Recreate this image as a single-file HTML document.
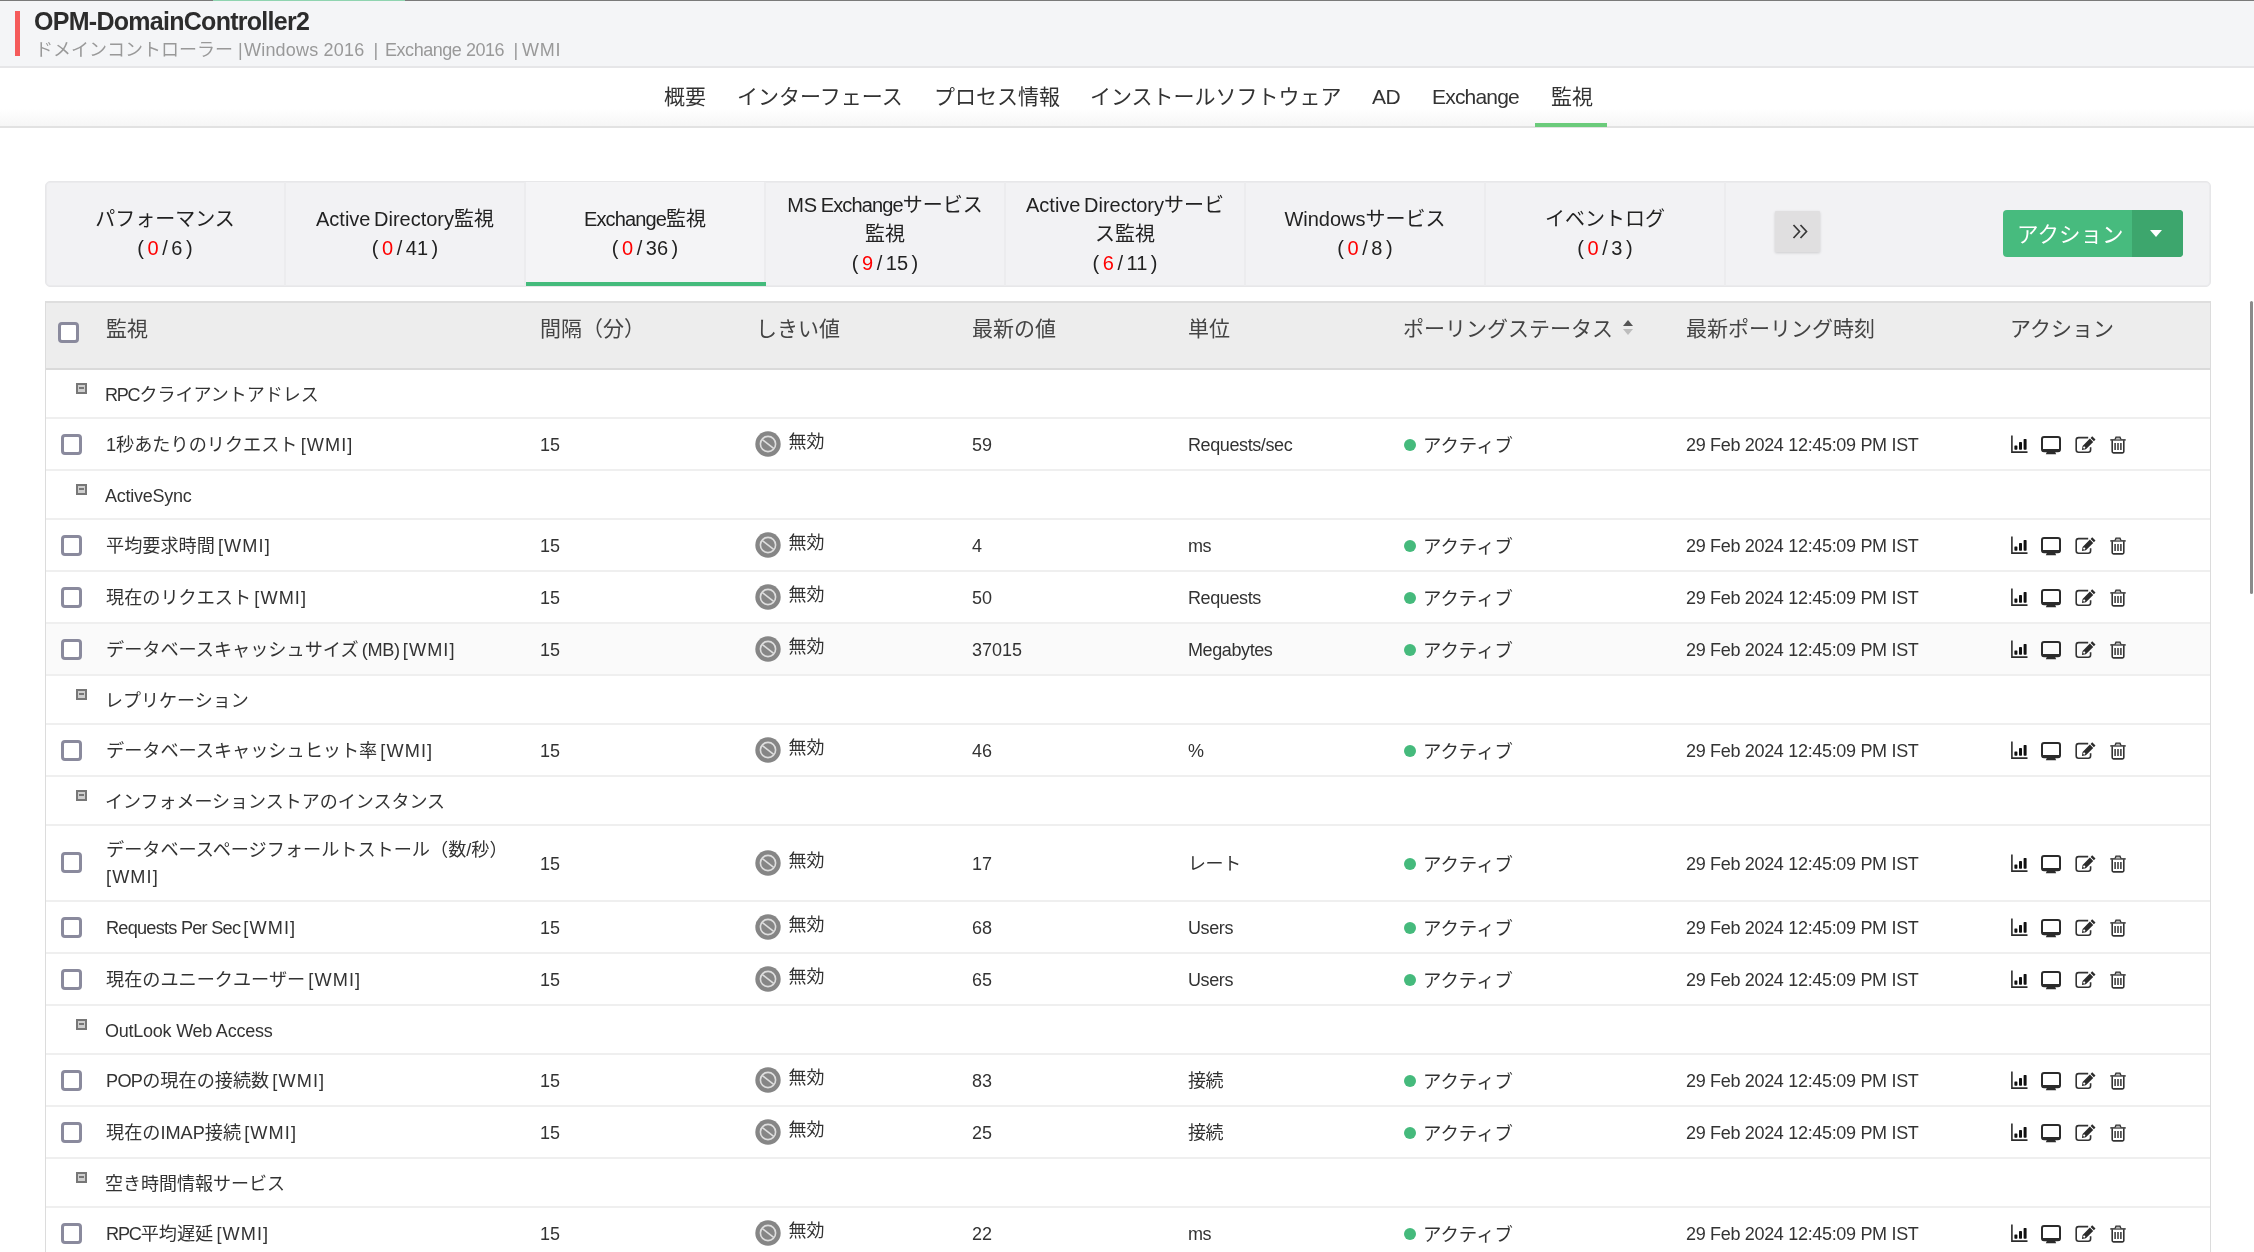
<!DOCTYPE html>
<html lang="ja">
<head>
<meta charset="utf-8">
<title>OPM-DomainController2</title>
<style>
*{box-sizing:border-box}
html,body{margin:0;padding:0}
body{will-change:transform;width:2254px;height:1252px;overflow:hidden;background:#fff;position:relative;font-family:"Liberation Sans","Noto Sans CJK JP",sans-serif;color:#333;font-size:18px}
#topline{position:absolute;left:0;top:0;width:2254px;height:2px;background:#7a7a7a}
#topline i{position:absolute;left:213px;top:0;width:192px;height:2px;background:#8fd4b0}
#hdr{position:absolute;left:0;top:1px;width:2254px;height:67px;background:#f4f5f7;border-bottom:2px solid #e6e6e8}
#hdr .bar{position:absolute;left:15px;top:9.5px;width:5px;height:45px;background:#f55b5b}
#hdr h1{position:absolute;left:34px;top:5px;margin:0;font-size:25px;line-height:30px;font-weight:bold;color:#2c2c2c;letter-spacing:-.72px;white-space:nowrap}
#hdr p{position:absolute;left:35px;top:37px;margin:0;font-size:18px;line-height:24px;color:#999;white-space:pre}#hdr p span{position:absolute;top:0}
#nav{position:absolute;left:0;top:68px;width:2254px;height:60px;background:linear-gradient(#fff 0,#fff 70%,#f6f6f6 100%);border-bottom:2px solid #e2e2e2}
#nav a{position:absolute;top:0;height:59px;line-height:58px;font-size:21px;color:#333;white-space:nowrap}
#nav .act{position:absolute;left:1535px;top:55px;width:72px;height:4px;background:#6bcb7b}
#tabs{position:absolute;left:45px;top:181px;width:2166px;height:106px;background:#f2f2f4;border:1px solid #e7e7e9;box-shadow:inset 0 0 0 1px #ebebed;border-radius:5px}
#tabs .t{position:absolute;top:0;width:240px;height:104px;border-right:2px solid #ececee;text-align:center;font-size:20px;line-height:29px;color:#222;display:flex;flex-direction:column;justify-content:center;word-spacing:-2px}
#tabs .t em{font-style:normal;color:#f00}
#tabs .t.on{background:#f4f4f6}
#tabs .t.on:after{content:"";position:absolute;left:0;bottom:0;width:240px;height:4px;background:#44bb7c}
#more{position:absolute;left:1729px;top:29px;width:45px;height:41px;background:#e0dfe0;border-radius:1px;box-shadow:0 1px 3px rgba(0,0,0,.16)}
#actb{position:absolute;left:1957px;top:28px;width:180px;height:47px;background:#47bb7e;border-radius:4px;color:#fff;font-size:21.5px;line-height:50px;padding-left:14px;overflow:hidden}
#actb i{position:absolute;left:129px;top:0;width:51px;height:48px;background:#3da66d}
#actb i:after{content:"";position:absolute;left:18px;top:20px;border:6px solid transparent;border-top:7px solid #fff;border-bottom:0}
#tbl{position:absolute;left:45px;top:301px;width:2166px;height:960px;border:1px solid #dcdcdc;border-top:2px solid #dedede;border-bottom:0}
#th{position:relative;height:67px;background:#ededed;border-bottom:2px solid #dadada;font-size:21px;color:#444}
#th span{position:absolute;top:11px;line-height:30px;white-space:nowrap}
.cb{position:absolute;left:15px;width:21px;height:21px;border:3px solid #8a8a9d;border-radius:4px;background:#fff}
.row{position:relative;border-bottom:2px solid #efefef;white-space:nowrap}
.row.g{height:49px}
.row.d{height:52px}
.row.two{height:76px}
.row.alt{background:#fafafa}
.row>span{position:absolute;top:0;line-height:53.5px;height:54px}
.row.d .cb{top:15px}
.row.two .cb{top:26px}
.row.two>span{top:12px}
.row.two>.c1{top:11px;line-height:27px;height:54px}
.col{position:absolute;left:30px;top:12.5px;width:11px;height:11px;border:2px solid #777;background:#cfcfcf}
.col:after{content:"";position:absolute;left:1px;top:2px;width:5px;height:2px;background:#777}
.gt{left:59px;line-height:50px !important}
.c1{left:60px}.c2{left:494px}.c3{left:710px}.c4{left:926px}.c5{left:1142px}.c6{left:1357px}.c7{left:1640px}
.c3 b{font-weight:normal;font-size:18px;position:absolute;left:32.5px;top:-3px}
.dis{position:absolute;left:-1px;top:12px}
.dot{position:absolute;left:1px;top:20px;width:12px;height:12px;border-radius:6px;background:#45ba7c}
.c6{padding-left:20px}
.c7{letter-spacing:-.32px}
.l{letter-spacing:-.4px}.w{letter-spacing:1.1px;margin-left:-3px}.l2{letter-spacing:-.24px}.w0{letter-spacing:1.1px}.rq{letter-spacing:-.75px}.pop{letter-spacing:-.7px}.mb{letter-spacing:-.35px;margin-left:-1.5px}.c6{font-size:18.4px}.c1{font-size:18.15px}.rpc{letter-spacing:-1.2px}.x{letter-spacing:-.85px}.c5{letter-spacing:-.4px}
.acts svg{position:absolute}
.row .acts{left:0}
.i1{left:1965px;top:15.5px}.i2{left:1995px;top:16.5px}.i3{left:2029px;top:16.5px}.i4{left:2064px;top:16.5px}
.row.two .acts{top:12px}
#sb{position:absolute;left:2249.5px;top:301px;width:3px;height:292.5px;background:#8a8a8a;border-radius:1.5px}
</style>
</head>
<body>
<div id="topline"><i></i></div>
<div id="hdr"><div class="bar"></div><h1>OPM-DomainController2</h1><p><span style="left:0">ドメインコントローラー</span><span style="left:203px">|</span><span style="left:209px;letter-spacing:.2px">Windows 2016</span><span style="left:338.5px">|</span><span style="left:350px;letter-spacing:-.46px">Exchange 2016</span><span style="left:478.5px">|</span><span style="left:487px;letter-spacing:.7px">WMI</span></p></div>
<div id="nav">
<a style="left:664px">概要</a>
<a style="left:737px">インターフェース</a>
<a style="left:934px">プロセス情報</a>
<a style="left:1090px">インストールソフトウェア</a>
<a style="left:1372px" class="l">AD</a>
<a style="left:1432px;letter-spacing:-.8px">Exchange</a>
<a style="left:1551px">監視</a>
<div class="act"></div>
</div>
<div id="tabs">
<div class="t" style="left:0"><div>パフォーマンス</div><div>( <em>0</em> / 6 )</div></div>
<div class="t" style="left:240px"><div>Active Directory監視</div><div>( <em>0</em> / 41 )</div></div>
<div class="t on" style="left:480px"><div><span class="x">Exchange</span>監視</div><div>( <em>0</em> / 36 )</div></div>
<div class="t" style="left:720px"><div>MS <span class="x">Exchange</span>サービス</div><div>監視</div><div>( <em>9</em> / 15 )</div></div>
<div class="t" style="left:960px"><div>Active Directoryサービ</div><div>ス監視</div><div>( <em>6</em> / 11 )</div></div>
<div class="t" style="left:1200px"><div>Windowsサービス</div><div>( <em>0</em> / 8 )</div></div>
<div class="t" style="left:1440px"><div>イベントログ</div><div>( <em>0</em> / 3 )</div></div>
<div id="more"><svg width="45" height="41" viewBox="0 0 45 41"><path d="M18.5 14l6 6.5-6 6.5M25.5 14l6 6.5-6 6.5" fill="none" stroke="#383838" stroke-width="1.7"/></svg></div>
<div id="actb">アクション<i></i></div>
</div>
<div id="tbl">
<div id="th"><i class="cb" style="left:12px;top:19px"></i>
<span style="left:60px">監視</span><span style="left:494px">間隔（分）</span><span style="left:710px">しきい値</span><span style="left:926px">最新の値</span><span style="left:1142px">単位</span><span style="left:1357px">ポーリングステータス</span><span style="left:1640px">最新ポーリング時刻</span><span style="left:1964px">アクション</span>
<svg style="position:absolute;left:1576px;top:16px" width="12" height="17" viewBox="0 0 12 17"><path d="M1 7l5-6 5 6z" fill="#555"/><path d="M1 10l5 6 5-6z" fill="#bdbdbd"/></svg>
</div>
<div class="row g"><i class="col"></i><span class="gt "><span class=rpc>RPC</span>クライアントアドレス</span></div>
<div class="row d"><i class="cb"></i><span class="c1">1秒あたりのリクエスト<span class="w"> [WMI]</span></span><span class="c2">15</span><span class="c3"><svg class="dis" viewBox="0 0 26 26" width="26" height="26"><circle cx="13" cy="13" r="12.7" fill="#868686"/><circle cx="13" cy="13" r="7.6" fill="none" stroke="#dedede" stroke-width="1.6"/><path d="M7.4 8.6l11.2 8.8" stroke="#dedede" stroke-width="1.6"/></svg><b>無効</b></span><span class="c4">59</span><span class="c5">Requests/sec</span><span class="c6"><i class="dot"></i>アクティブ</span><span class="c7">29 Feb 2024 12:45:09 PM IST</span><span class="acts"><svg class="i1" viewBox="0 0 18 18" width="18" height="18"><path d="M0.9 0.5v16.6h15.6" fill="none" stroke="#2b2b2b" stroke-width="1.6"/><rect x="3.4" y="10.4" width="3" height="4.4" rx=".7" fill="#111"/><rect x="8" y="7" width="3" height="7.8" rx=".7" fill="#111"/><rect x="12.6" y="4" width="3" height="10.8" rx=".7" fill="#111"/></svg><svg class="i2" viewBox="0 0 20 19" width="20" height="19"><rect x="1" y="1" width="18" height="14.2" rx="2" fill="none" stroke="#2b2b2b" stroke-width="2"/><rect x="1" y="13" width="18" height="2.4" fill="#2b2b2b"/><path d="M6 15.5h8l1.2 2.8h-10.4z" fill="#2b2b2b"/></svg><svg class="i3" viewBox="0 0 21 18" width="21" height="18"><path d="M13.2 1.6H3.6a2.4 2.4 0 0 0-2.4 2.4v9.8a2.4 2.4 0 0 0 2.4 2.4h9.6a2.4 2.4 0 0 0 2.4-2.4v-2.6" fill="none" stroke="#333" stroke-width="1.6"/><path d="M17.2 0.3l3.3 3.3-1.6 1.6-3.3-3.3zM14.9 2.6l3.3 3.3-7.3 7.3-4 .8.7-4.1z" fill="#2b2b2b"/><circle cx="9.2" cy="11.6" r="1.1" fill="#fff"/></svg><svg class="i4" viewBox="0 0 16 18" width="16" height="18"><path d="M0.3 3.9h15.4" stroke="#333" stroke-width="1.5"/><path d="M5 3.6l1-2.4h4l1 2.4" fill="#bbb" stroke="#333" stroke-width="1.3"/><path d="M2.2 4.2v11.4a1.3 1.3 0 0 0 1.3 1.3h9a1.3 1.3 0 0 0 1.3-1.3V4.2" fill="none" stroke="#333" stroke-width="1.6"/><path d="M5.1 7v7M8 7v7M10.9 7v7" stroke="#333" stroke-width="1.5"/></svg></span></div>
<div class="row g"><i class="col"></i><span class="gt l2">ActiveSync</span></div>
<div class="row d"><i class="cb"></i><span class="c1">平均要求時間<span class="w"> [WMI]</span></span><span class="c2">15</span><span class="c3"><svg class="dis" viewBox="0 0 26 26" width="26" height="26"><circle cx="13" cy="13" r="12.7" fill="#868686"/><circle cx="13" cy="13" r="7.6" fill="none" stroke="#dedede" stroke-width="1.6"/><path d="M7.4 8.6l11.2 8.8" stroke="#dedede" stroke-width="1.6"/></svg><b>無効</b></span><span class="c4">4</span><span class="c5">ms</span><span class="c6"><i class="dot"></i>アクティブ</span><span class="c7">29 Feb 2024 12:45:09 PM IST</span><span class="acts"><svg class="i1" viewBox="0 0 18 18" width="18" height="18"><path d="M0.9 0.5v16.6h15.6" fill="none" stroke="#2b2b2b" stroke-width="1.6"/><rect x="3.4" y="10.4" width="3" height="4.4" rx=".7" fill="#111"/><rect x="8" y="7" width="3" height="7.8" rx=".7" fill="#111"/><rect x="12.6" y="4" width="3" height="10.8" rx=".7" fill="#111"/></svg><svg class="i2" viewBox="0 0 20 19" width="20" height="19"><rect x="1" y="1" width="18" height="14.2" rx="2" fill="none" stroke="#2b2b2b" stroke-width="2"/><rect x="1" y="13" width="18" height="2.4" fill="#2b2b2b"/><path d="M6 15.5h8l1.2 2.8h-10.4z" fill="#2b2b2b"/></svg><svg class="i3" viewBox="0 0 21 18" width="21" height="18"><path d="M13.2 1.6H3.6a2.4 2.4 0 0 0-2.4 2.4v9.8a2.4 2.4 0 0 0 2.4 2.4h9.6a2.4 2.4 0 0 0 2.4-2.4v-2.6" fill="none" stroke="#333" stroke-width="1.6"/><path d="M17.2 0.3l3.3 3.3-1.6 1.6-3.3-3.3zM14.9 2.6l3.3 3.3-7.3 7.3-4 .8.7-4.1z" fill="#2b2b2b"/><circle cx="9.2" cy="11.6" r="1.1" fill="#fff"/></svg><svg class="i4" viewBox="0 0 16 18" width="16" height="18"><path d="M0.3 3.9h15.4" stroke="#333" stroke-width="1.5"/><path d="M5 3.6l1-2.4h4l1 2.4" fill="#bbb" stroke="#333" stroke-width="1.3"/><path d="M2.2 4.2v11.4a1.3 1.3 0 0 0 1.3 1.3h9a1.3 1.3 0 0 0 1.3-1.3V4.2" fill="none" stroke="#333" stroke-width="1.6"/><path d="M5.1 7v7M8 7v7M10.9 7v7" stroke="#333" stroke-width="1.5"/></svg></span></div>
<div class="row d"><i class="cb"></i><span class="c1">現在のリクエスト<span class="w"> [WMI]</span></span><span class="c2">15</span><span class="c3"><svg class="dis" viewBox="0 0 26 26" width="26" height="26"><circle cx="13" cy="13" r="12.7" fill="#868686"/><circle cx="13" cy="13" r="7.6" fill="none" stroke="#dedede" stroke-width="1.6"/><path d="M7.4 8.6l11.2 8.8" stroke="#dedede" stroke-width="1.6"/></svg><b>無効</b></span><span class="c4">50</span><span class="c5">Requests</span><span class="c6"><i class="dot"></i>アクティブ</span><span class="c7">29 Feb 2024 12:45:09 PM IST</span><span class="acts"><svg class="i1" viewBox="0 0 18 18" width="18" height="18"><path d="M0.9 0.5v16.6h15.6" fill="none" stroke="#2b2b2b" stroke-width="1.6"/><rect x="3.4" y="10.4" width="3" height="4.4" rx=".7" fill="#111"/><rect x="8" y="7" width="3" height="7.8" rx=".7" fill="#111"/><rect x="12.6" y="4" width="3" height="10.8" rx=".7" fill="#111"/></svg><svg class="i2" viewBox="0 0 20 19" width="20" height="19"><rect x="1" y="1" width="18" height="14.2" rx="2" fill="none" stroke="#2b2b2b" stroke-width="2"/><rect x="1" y="13" width="18" height="2.4" fill="#2b2b2b"/><path d="M6 15.5h8l1.2 2.8h-10.4z" fill="#2b2b2b"/></svg><svg class="i3" viewBox="0 0 21 18" width="21" height="18"><path d="M13.2 1.6H3.6a2.4 2.4 0 0 0-2.4 2.4v9.8a2.4 2.4 0 0 0 2.4 2.4h9.6a2.4 2.4 0 0 0 2.4-2.4v-2.6" fill="none" stroke="#333" stroke-width="1.6"/><path d="M17.2 0.3l3.3 3.3-1.6 1.6-3.3-3.3zM14.9 2.6l3.3 3.3-7.3 7.3-4 .8.7-4.1z" fill="#2b2b2b"/><circle cx="9.2" cy="11.6" r="1.1" fill="#fff"/></svg><svg class="i4" viewBox="0 0 16 18" width="16" height="18"><path d="M0.3 3.9h15.4" stroke="#333" stroke-width="1.5"/><path d="M5 3.6l1-2.4h4l1 2.4" fill="#bbb" stroke="#333" stroke-width="1.3"/><path d="M2.2 4.2v11.4a1.3 1.3 0 0 0 1.3 1.3h9a1.3 1.3 0 0 0 1.3-1.3V4.2" fill="none" stroke="#333" stroke-width="1.6"/><path d="M5.1 7v7M8 7v7M10.9 7v7" stroke="#333" stroke-width="1.5"/></svg></span></div>
<div class="row d alt"><i class="cb"></i><span class="c1">データベースキャッシュサイズ<span class="mb"> (MB)</span><span class="w"> [WMI]</span></span><span class="c2">15</span><span class="c3"><svg class="dis" viewBox="0 0 26 26" width="26" height="26"><circle cx="13" cy="13" r="12.7" fill="#868686"/><circle cx="13" cy="13" r="7.6" fill="none" stroke="#dedede" stroke-width="1.6"/><path d="M7.4 8.6l11.2 8.8" stroke="#dedede" stroke-width="1.6"/></svg><b>無効</b></span><span class="c4">37015</span><span class="c5">Megabytes</span><span class="c6"><i class="dot"></i>アクティブ</span><span class="c7">29 Feb 2024 12:45:09 PM IST</span><span class="acts"><svg class="i1" viewBox="0 0 18 18" width="18" height="18"><path d="M0.9 0.5v16.6h15.6" fill="none" stroke="#2b2b2b" stroke-width="1.6"/><rect x="3.4" y="10.4" width="3" height="4.4" rx=".7" fill="#111"/><rect x="8" y="7" width="3" height="7.8" rx=".7" fill="#111"/><rect x="12.6" y="4" width="3" height="10.8" rx=".7" fill="#111"/></svg><svg class="i2" viewBox="0 0 20 19" width="20" height="19"><rect x="1" y="1" width="18" height="14.2" rx="2" fill="none" stroke="#2b2b2b" stroke-width="2"/><rect x="1" y="13" width="18" height="2.4" fill="#2b2b2b"/><path d="M6 15.5h8l1.2 2.8h-10.4z" fill="#2b2b2b"/></svg><svg class="i3" viewBox="0 0 21 18" width="21" height="18"><path d="M13.2 1.6H3.6a2.4 2.4 0 0 0-2.4 2.4v9.8a2.4 2.4 0 0 0 2.4 2.4h9.6a2.4 2.4 0 0 0 2.4-2.4v-2.6" fill="none" stroke="#333" stroke-width="1.6"/><path d="M17.2 0.3l3.3 3.3-1.6 1.6-3.3-3.3zM14.9 2.6l3.3 3.3-7.3 7.3-4 .8.7-4.1z" fill="#2b2b2b"/><circle cx="9.2" cy="11.6" r="1.1" fill="#fff"/></svg><svg class="i4" viewBox="0 0 16 18" width="16" height="18"><path d="M0.3 3.9h15.4" stroke="#333" stroke-width="1.5"/><path d="M5 3.6l1-2.4h4l1 2.4" fill="#bbb" stroke="#333" stroke-width="1.3"/><path d="M2.2 4.2v11.4a1.3 1.3 0 0 0 1.3 1.3h9a1.3 1.3 0 0 0 1.3-1.3V4.2" fill="none" stroke="#333" stroke-width="1.6"/><path d="M5.1 7v7M8 7v7M10.9 7v7" stroke="#333" stroke-width="1.5"/></svg></span></div>
<div class="row g"><i class="col"></i><span class="gt ">レプリケーション</span></div>
<div class="row d"><i class="cb"></i><span class="c1">データベースキャッシュヒット率<span class="w"> [WMI]</span></span><span class="c2">15</span><span class="c3"><svg class="dis" viewBox="0 0 26 26" width="26" height="26"><circle cx="13" cy="13" r="12.7" fill="#868686"/><circle cx="13" cy="13" r="7.6" fill="none" stroke="#dedede" stroke-width="1.6"/><path d="M7.4 8.6l11.2 8.8" stroke="#dedede" stroke-width="1.6"/></svg><b>無効</b></span><span class="c4">46</span><span class="c5">%</span><span class="c6"><i class="dot"></i>アクティブ</span><span class="c7">29 Feb 2024 12:45:09 PM IST</span><span class="acts"><svg class="i1" viewBox="0 0 18 18" width="18" height="18"><path d="M0.9 0.5v16.6h15.6" fill="none" stroke="#2b2b2b" stroke-width="1.6"/><rect x="3.4" y="10.4" width="3" height="4.4" rx=".7" fill="#111"/><rect x="8" y="7" width="3" height="7.8" rx=".7" fill="#111"/><rect x="12.6" y="4" width="3" height="10.8" rx=".7" fill="#111"/></svg><svg class="i2" viewBox="0 0 20 19" width="20" height="19"><rect x="1" y="1" width="18" height="14.2" rx="2" fill="none" stroke="#2b2b2b" stroke-width="2"/><rect x="1" y="13" width="18" height="2.4" fill="#2b2b2b"/><path d="M6 15.5h8l1.2 2.8h-10.4z" fill="#2b2b2b"/></svg><svg class="i3" viewBox="0 0 21 18" width="21" height="18"><path d="M13.2 1.6H3.6a2.4 2.4 0 0 0-2.4 2.4v9.8a2.4 2.4 0 0 0 2.4 2.4h9.6a2.4 2.4 0 0 0 2.4-2.4v-2.6" fill="none" stroke="#333" stroke-width="1.6"/><path d="M17.2 0.3l3.3 3.3-1.6 1.6-3.3-3.3zM14.9 2.6l3.3 3.3-7.3 7.3-4 .8.7-4.1z" fill="#2b2b2b"/><circle cx="9.2" cy="11.6" r="1.1" fill="#fff"/></svg><svg class="i4" viewBox="0 0 16 18" width="16" height="18"><path d="M0.3 3.9h15.4" stroke="#333" stroke-width="1.5"/><path d="M5 3.6l1-2.4h4l1 2.4" fill="#bbb" stroke="#333" stroke-width="1.3"/><path d="M2.2 4.2v11.4a1.3 1.3 0 0 0 1.3 1.3h9a1.3 1.3 0 0 0 1.3-1.3V4.2" fill="none" stroke="#333" stroke-width="1.6"/><path d="M5.1 7v7M8 7v7M10.9 7v7" stroke="#333" stroke-width="1.5"/></svg></span></div>
<div class="row g"><i class="col"></i><span class="gt ">インフォメーションストアのインスタンス</span></div>
<div class="row d two"><i class="cb"></i><span class="c1">データベースページフォールトストール（数/秒）<br><span class="w0">[WMI]</span></span><span class="c2">15</span><span class="c3"><svg class="dis" viewBox="0 0 26 26" width="26" height="26"><circle cx="13" cy="13" r="12.7" fill="#868686"/><circle cx="13" cy="13" r="7.6" fill="none" stroke="#dedede" stroke-width="1.6"/><path d="M7.4 8.6l11.2 8.8" stroke="#dedede" stroke-width="1.6"/></svg><b>無効</b></span><span class="c4">17</span><span class="c5">レート</span><span class="c6"><i class="dot"></i>アクティブ</span><span class="c7">29 Feb 2024 12:45:09 PM IST</span><span class="acts"><svg class="i1" viewBox="0 0 18 18" width="18" height="18"><path d="M0.9 0.5v16.6h15.6" fill="none" stroke="#2b2b2b" stroke-width="1.6"/><rect x="3.4" y="10.4" width="3" height="4.4" rx=".7" fill="#111"/><rect x="8" y="7" width="3" height="7.8" rx=".7" fill="#111"/><rect x="12.6" y="4" width="3" height="10.8" rx=".7" fill="#111"/></svg><svg class="i2" viewBox="0 0 20 19" width="20" height="19"><rect x="1" y="1" width="18" height="14.2" rx="2" fill="none" stroke="#2b2b2b" stroke-width="2"/><rect x="1" y="13" width="18" height="2.4" fill="#2b2b2b"/><path d="M6 15.5h8l1.2 2.8h-10.4z" fill="#2b2b2b"/></svg><svg class="i3" viewBox="0 0 21 18" width="21" height="18"><path d="M13.2 1.6H3.6a2.4 2.4 0 0 0-2.4 2.4v9.8a2.4 2.4 0 0 0 2.4 2.4h9.6a2.4 2.4 0 0 0 2.4-2.4v-2.6" fill="none" stroke="#333" stroke-width="1.6"/><path d="M17.2 0.3l3.3 3.3-1.6 1.6-3.3-3.3zM14.9 2.6l3.3 3.3-7.3 7.3-4 .8.7-4.1z" fill="#2b2b2b"/><circle cx="9.2" cy="11.6" r="1.1" fill="#fff"/></svg><svg class="i4" viewBox="0 0 16 18" width="16" height="18"><path d="M0.3 3.9h15.4" stroke="#333" stroke-width="1.5"/><path d="M5 3.6l1-2.4h4l1 2.4" fill="#bbb" stroke="#333" stroke-width="1.3"/><path d="M2.2 4.2v11.4a1.3 1.3 0 0 0 1.3 1.3h9a1.3 1.3 0 0 0 1.3-1.3V4.2" fill="none" stroke="#333" stroke-width="1.6"/><path d="M5.1 7v7M8 7v7M10.9 7v7" stroke="#333" stroke-width="1.5"/></svg></span></div>
<div class="row d"><i class="cb"></i><span class="c1"><span class="rq">Requests Per Sec</span><span class="w"> [WMI]</span></span><span class="c2">15</span><span class="c3"><svg class="dis" viewBox="0 0 26 26" width="26" height="26"><circle cx="13" cy="13" r="12.7" fill="#868686"/><circle cx="13" cy="13" r="7.6" fill="none" stroke="#dedede" stroke-width="1.6"/><path d="M7.4 8.6l11.2 8.8" stroke="#dedede" stroke-width="1.6"/></svg><b>無効</b></span><span class="c4">68</span><span class="c5">Users</span><span class="c6"><i class="dot"></i>アクティブ</span><span class="c7">29 Feb 2024 12:45:09 PM IST</span><span class="acts"><svg class="i1" viewBox="0 0 18 18" width="18" height="18"><path d="M0.9 0.5v16.6h15.6" fill="none" stroke="#2b2b2b" stroke-width="1.6"/><rect x="3.4" y="10.4" width="3" height="4.4" rx=".7" fill="#111"/><rect x="8" y="7" width="3" height="7.8" rx=".7" fill="#111"/><rect x="12.6" y="4" width="3" height="10.8" rx=".7" fill="#111"/></svg><svg class="i2" viewBox="0 0 20 19" width="20" height="19"><rect x="1" y="1" width="18" height="14.2" rx="2" fill="none" stroke="#2b2b2b" stroke-width="2"/><rect x="1" y="13" width="18" height="2.4" fill="#2b2b2b"/><path d="M6 15.5h8l1.2 2.8h-10.4z" fill="#2b2b2b"/></svg><svg class="i3" viewBox="0 0 21 18" width="21" height="18"><path d="M13.2 1.6H3.6a2.4 2.4 0 0 0-2.4 2.4v9.8a2.4 2.4 0 0 0 2.4 2.4h9.6a2.4 2.4 0 0 0 2.4-2.4v-2.6" fill="none" stroke="#333" stroke-width="1.6"/><path d="M17.2 0.3l3.3 3.3-1.6 1.6-3.3-3.3zM14.9 2.6l3.3 3.3-7.3 7.3-4 .8.7-4.1z" fill="#2b2b2b"/><circle cx="9.2" cy="11.6" r="1.1" fill="#fff"/></svg><svg class="i4" viewBox="0 0 16 18" width="16" height="18"><path d="M0.3 3.9h15.4" stroke="#333" stroke-width="1.5"/><path d="M5 3.6l1-2.4h4l1 2.4" fill="#bbb" stroke="#333" stroke-width="1.3"/><path d="M2.2 4.2v11.4a1.3 1.3 0 0 0 1.3 1.3h9a1.3 1.3 0 0 0 1.3-1.3V4.2" fill="none" stroke="#333" stroke-width="1.6"/><path d="M5.1 7v7M8 7v7M10.9 7v7" stroke="#333" stroke-width="1.5"/></svg></span></div>
<div class="row d"><i class="cb"></i><span class="c1">現在のユニークユーザー<span class="w"> [WMI]</span></span><span class="c2">15</span><span class="c3"><svg class="dis" viewBox="0 0 26 26" width="26" height="26"><circle cx="13" cy="13" r="12.7" fill="#868686"/><circle cx="13" cy="13" r="7.6" fill="none" stroke="#dedede" stroke-width="1.6"/><path d="M7.4 8.6l11.2 8.8" stroke="#dedede" stroke-width="1.6"/></svg><b>無効</b></span><span class="c4">65</span><span class="c5">Users</span><span class="c6"><i class="dot"></i>アクティブ</span><span class="c7">29 Feb 2024 12:45:09 PM IST</span><span class="acts"><svg class="i1" viewBox="0 0 18 18" width="18" height="18"><path d="M0.9 0.5v16.6h15.6" fill="none" stroke="#2b2b2b" stroke-width="1.6"/><rect x="3.4" y="10.4" width="3" height="4.4" rx=".7" fill="#111"/><rect x="8" y="7" width="3" height="7.8" rx=".7" fill="#111"/><rect x="12.6" y="4" width="3" height="10.8" rx=".7" fill="#111"/></svg><svg class="i2" viewBox="0 0 20 19" width="20" height="19"><rect x="1" y="1" width="18" height="14.2" rx="2" fill="none" stroke="#2b2b2b" stroke-width="2"/><rect x="1" y="13" width="18" height="2.4" fill="#2b2b2b"/><path d="M6 15.5h8l1.2 2.8h-10.4z" fill="#2b2b2b"/></svg><svg class="i3" viewBox="0 0 21 18" width="21" height="18"><path d="M13.2 1.6H3.6a2.4 2.4 0 0 0-2.4 2.4v9.8a2.4 2.4 0 0 0 2.4 2.4h9.6a2.4 2.4 0 0 0 2.4-2.4v-2.6" fill="none" stroke="#333" stroke-width="1.6"/><path d="M17.2 0.3l3.3 3.3-1.6 1.6-3.3-3.3zM14.9 2.6l3.3 3.3-7.3 7.3-4 .8.7-4.1z" fill="#2b2b2b"/><circle cx="9.2" cy="11.6" r="1.1" fill="#fff"/></svg><svg class="i4" viewBox="0 0 16 18" width="16" height="18"><path d="M0.3 3.9h15.4" stroke="#333" stroke-width="1.5"/><path d="M5 3.6l1-2.4h4l1 2.4" fill="#bbb" stroke="#333" stroke-width="1.3"/><path d="M2.2 4.2v11.4a1.3 1.3 0 0 0 1.3 1.3h9a1.3 1.3 0 0 0 1.3-1.3V4.2" fill="none" stroke="#333" stroke-width="1.6"/><path d="M5.1 7v7M8 7v7M10.9 7v7" stroke="#333" stroke-width="1.5"/></svg></span></div>
<div class="row g"><i class="col"></i><span class="gt l2">OutLook Web Access</span></div>
<div class="row d"><i class="cb"></i><span class="c1"><span class="pop">POP</span>の現在の接続数<span class="w"> [WMI]</span></span><span class="c2">15</span><span class="c3"><svg class="dis" viewBox="0 0 26 26" width="26" height="26"><circle cx="13" cy="13" r="12.7" fill="#868686"/><circle cx="13" cy="13" r="7.6" fill="none" stroke="#dedede" stroke-width="1.6"/><path d="M7.4 8.6l11.2 8.8" stroke="#dedede" stroke-width="1.6"/></svg><b>無効</b></span><span class="c4">83</span><span class="c5">接続</span><span class="c6"><i class="dot"></i>アクティブ</span><span class="c7">29 Feb 2024 12:45:09 PM IST</span><span class="acts"><svg class="i1" viewBox="0 0 18 18" width="18" height="18"><path d="M0.9 0.5v16.6h15.6" fill="none" stroke="#2b2b2b" stroke-width="1.6"/><rect x="3.4" y="10.4" width="3" height="4.4" rx=".7" fill="#111"/><rect x="8" y="7" width="3" height="7.8" rx=".7" fill="#111"/><rect x="12.6" y="4" width="3" height="10.8" rx=".7" fill="#111"/></svg><svg class="i2" viewBox="0 0 20 19" width="20" height="19"><rect x="1" y="1" width="18" height="14.2" rx="2" fill="none" stroke="#2b2b2b" stroke-width="2"/><rect x="1" y="13" width="18" height="2.4" fill="#2b2b2b"/><path d="M6 15.5h8l1.2 2.8h-10.4z" fill="#2b2b2b"/></svg><svg class="i3" viewBox="0 0 21 18" width="21" height="18"><path d="M13.2 1.6H3.6a2.4 2.4 0 0 0-2.4 2.4v9.8a2.4 2.4 0 0 0 2.4 2.4h9.6a2.4 2.4 0 0 0 2.4-2.4v-2.6" fill="none" stroke="#333" stroke-width="1.6"/><path d="M17.2 0.3l3.3 3.3-1.6 1.6-3.3-3.3zM14.9 2.6l3.3 3.3-7.3 7.3-4 .8.7-4.1z" fill="#2b2b2b"/><circle cx="9.2" cy="11.6" r="1.1" fill="#fff"/></svg><svg class="i4" viewBox="0 0 16 18" width="16" height="18"><path d="M0.3 3.9h15.4" stroke="#333" stroke-width="1.5"/><path d="M5 3.6l1-2.4h4l1 2.4" fill="#bbb" stroke="#333" stroke-width="1.3"/><path d="M2.2 4.2v11.4a1.3 1.3 0 0 0 1.3 1.3h9a1.3 1.3 0 0 0 1.3-1.3V4.2" fill="none" stroke="#333" stroke-width="1.6"/><path d="M5.1 7v7M8 7v7M10.9 7v7" stroke="#333" stroke-width="1.5"/></svg></span></div>
<div class="row d"><i class="cb"></i><span class="c1">現在のIMAP接続<span class="w"> [WMI]</span></span><span class="c2">15</span><span class="c3"><svg class="dis" viewBox="0 0 26 26" width="26" height="26"><circle cx="13" cy="13" r="12.7" fill="#868686"/><circle cx="13" cy="13" r="7.6" fill="none" stroke="#dedede" stroke-width="1.6"/><path d="M7.4 8.6l11.2 8.8" stroke="#dedede" stroke-width="1.6"/></svg><b>無効</b></span><span class="c4">25</span><span class="c5">接続</span><span class="c6"><i class="dot"></i>アクティブ</span><span class="c7">29 Feb 2024 12:45:09 PM IST</span><span class="acts"><svg class="i1" viewBox="0 0 18 18" width="18" height="18"><path d="M0.9 0.5v16.6h15.6" fill="none" stroke="#2b2b2b" stroke-width="1.6"/><rect x="3.4" y="10.4" width="3" height="4.4" rx=".7" fill="#111"/><rect x="8" y="7" width="3" height="7.8" rx=".7" fill="#111"/><rect x="12.6" y="4" width="3" height="10.8" rx=".7" fill="#111"/></svg><svg class="i2" viewBox="0 0 20 19" width="20" height="19"><rect x="1" y="1" width="18" height="14.2" rx="2" fill="none" stroke="#2b2b2b" stroke-width="2"/><rect x="1" y="13" width="18" height="2.4" fill="#2b2b2b"/><path d="M6 15.5h8l1.2 2.8h-10.4z" fill="#2b2b2b"/></svg><svg class="i3" viewBox="0 0 21 18" width="21" height="18"><path d="M13.2 1.6H3.6a2.4 2.4 0 0 0-2.4 2.4v9.8a2.4 2.4 0 0 0 2.4 2.4h9.6a2.4 2.4 0 0 0 2.4-2.4v-2.6" fill="none" stroke="#333" stroke-width="1.6"/><path d="M17.2 0.3l3.3 3.3-1.6 1.6-3.3-3.3zM14.9 2.6l3.3 3.3-7.3 7.3-4 .8.7-4.1z" fill="#2b2b2b"/><circle cx="9.2" cy="11.6" r="1.1" fill="#fff"/></svg><svg class="i4" viewBox="0 0 16 18" width="16" height="18"><path d="M0.3 3.9h15.4" stroke="#333" stroke-width="1.5"/><path d="M5 3.6l1-2.4h4l1 2.4" fill="#bbb" stroke="#333" stroke-width="1.3"/><path d="M2.2 4.2v11.4a1.3 1.3 0 0 0 1.3 1.3h9a1.3 1.3 0 0 0 1.3-1.3V4.2" fill="none" stroke="#333" stroke-width="1.6"/><path d="M5.1 7v7M8 7v7M10.9 7v7" stroke="#333" stroke-width="1.5"/></svg></span></div>
<div class="row g"><i class="col"></i><span class="gt ">空き時間情報サービス</span></div>
<div class="row d"><i class="cb"></i><span class="c1"><span class="rpc">RPC</span>平均遅延<span class="w"> [WMI]</span></span><span class="c2">15</span><span class="c3"><svg class="dis" viewBox="0 0 26 26" width="26" height="26"><circle cx="13" cy="13" r="12.7" fill="#868686"/><circle cx="13" cy="13" r="7.6" fill="none" stroke="#dedede" stroke-width="1.6"/><path d="M7.4 8.6l11.2 8.8" stroke="#dedede" stroke-width="1.6"/></svg><b>無効</b></span><span class="c4">22</span><span class="c5">ms</span><span class="c6"><i class="dot"></i>アクティブ</span><span class="c7">29 Feb 2024 12:45:09 PM IST</span><span class="acts"><svg class="i1" viewBox="0 0 18 18" width="18" height="18"><path d="M0.9 0.5v16.6h15.6" fill="none" stroke="#2b2b2b" stroke-width="1.6"/><rect x="3.4" y="10.4" width="3" height="4.4" rx=".7" fill="#111"/><rect x="8" y="7" width="3" height="7.8" rx=".7" fill="#111"/><rect x="12.6" y="4" width="3" height="10.8" rx=".7" fill="#111"/></svg><svg class="i2" viewBox="0 0 20 19" width="20" height="19"><rect x="1" y="1" width="18" height="14.2" rx="2" fill="none" stroke="#2b2b2b" stroke-width="2"/><rect x="1" y="13" width="18" height="2.4" fill="#2b2b2b"/><path d="M6 15.5h8l1.2 2.8h-10.4z" fill="#2b2b2b"/></svg><svg class="i3" viewBox="0 0 21 18" width="21" height="18"><path d="M13.2 1.6H3.6a2.4 2.4 0 0 0-2.4 2.4v9.8a2.4 2.4 0 0 0 2.4 2.4h9.6a2.4 2.4 0 0 0 2.4-2.4v-2.6" fill="none" stroke="#333" stroke-width="1.6"/><path d="M17.2 0.3l3.3 3.3-1.6 1.6-3.3-3.3zM14.9 2.6l3.3 3.3-7.3 7.3-4 .8.7-4.1z" fill="#2b2b2b"/><circle cx="9.2" cy="11.6" r="1.1" fill="#fff"/></svg><svg class="i4" viewBox="0 0 16 18" width="16" height="18"><path d="M0.3 3.9h15.4" stroke="#333" stroke-width="1.5"/><path d="M5 3.6l1-2.4h4l1 2.4" fill="#bbb" stroke="#333" stroke-width="1.3"/><path d="M2.2 4.2v11.4a1.3 1.3 0 0 0 1.3 1.3h9a1.3 1.3 0 0 0 1.3-1.3V4.2" fill="none" stroke="#333" stroke-width="1.6"/><path d="M5.1 7v7M8 7v7M10.9 7v7" stroke="#333" stroke-width="1.5"/></svg></span></div>
</div>
<div id="sb"></div>
</body>
</html>
